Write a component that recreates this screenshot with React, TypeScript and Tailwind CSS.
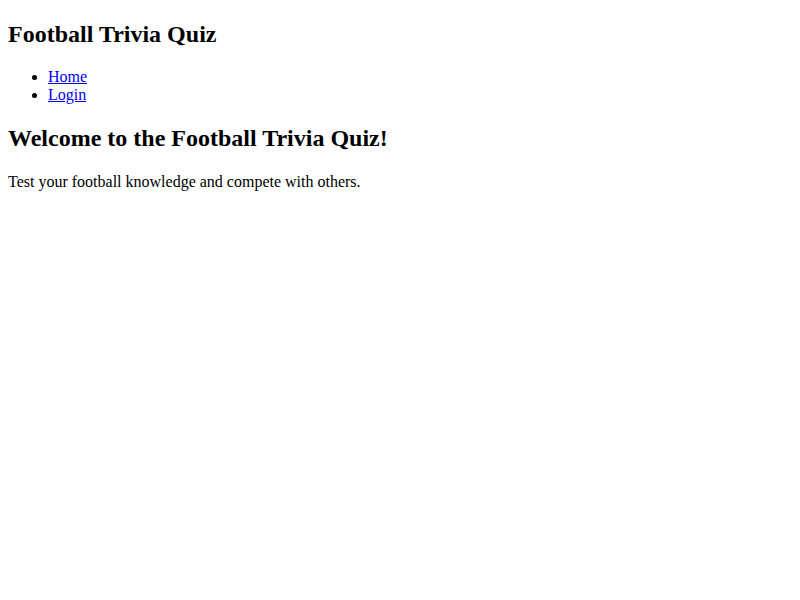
export default function App() {
  return (
    <div className="mx-2 font-['Liberation_Serif',_serif] text-[16px] leading-[normal] text-black bg-white">
      <header>
        <h1 className="mt-[21px] mb-[19.92px] text-[24px] font-bold leading-[normal]">
          Football Trivia Quiz
        </h1>
        <nav>
          <ul className="my-4 list-disc pl-10">
            <li>
              <a href="#" className="text-[#0000ee] underline">Home</a>
            </li>
            <li>
              <a href="#" className="text-[#0000ee] underline">Login</a>
            </li>
          </ul>
        </nav>
      </header>
      <main>
        <h2 className="mt-[21px] mb-[21px] text-[24px] font-bold leading-[normal]">
          Welcome to the Football Trivia Quiz!
        </h2>
        <p className="my-4">Test your football knowledge and compete with others.</p>
      </main>
    </div>
  );
}
